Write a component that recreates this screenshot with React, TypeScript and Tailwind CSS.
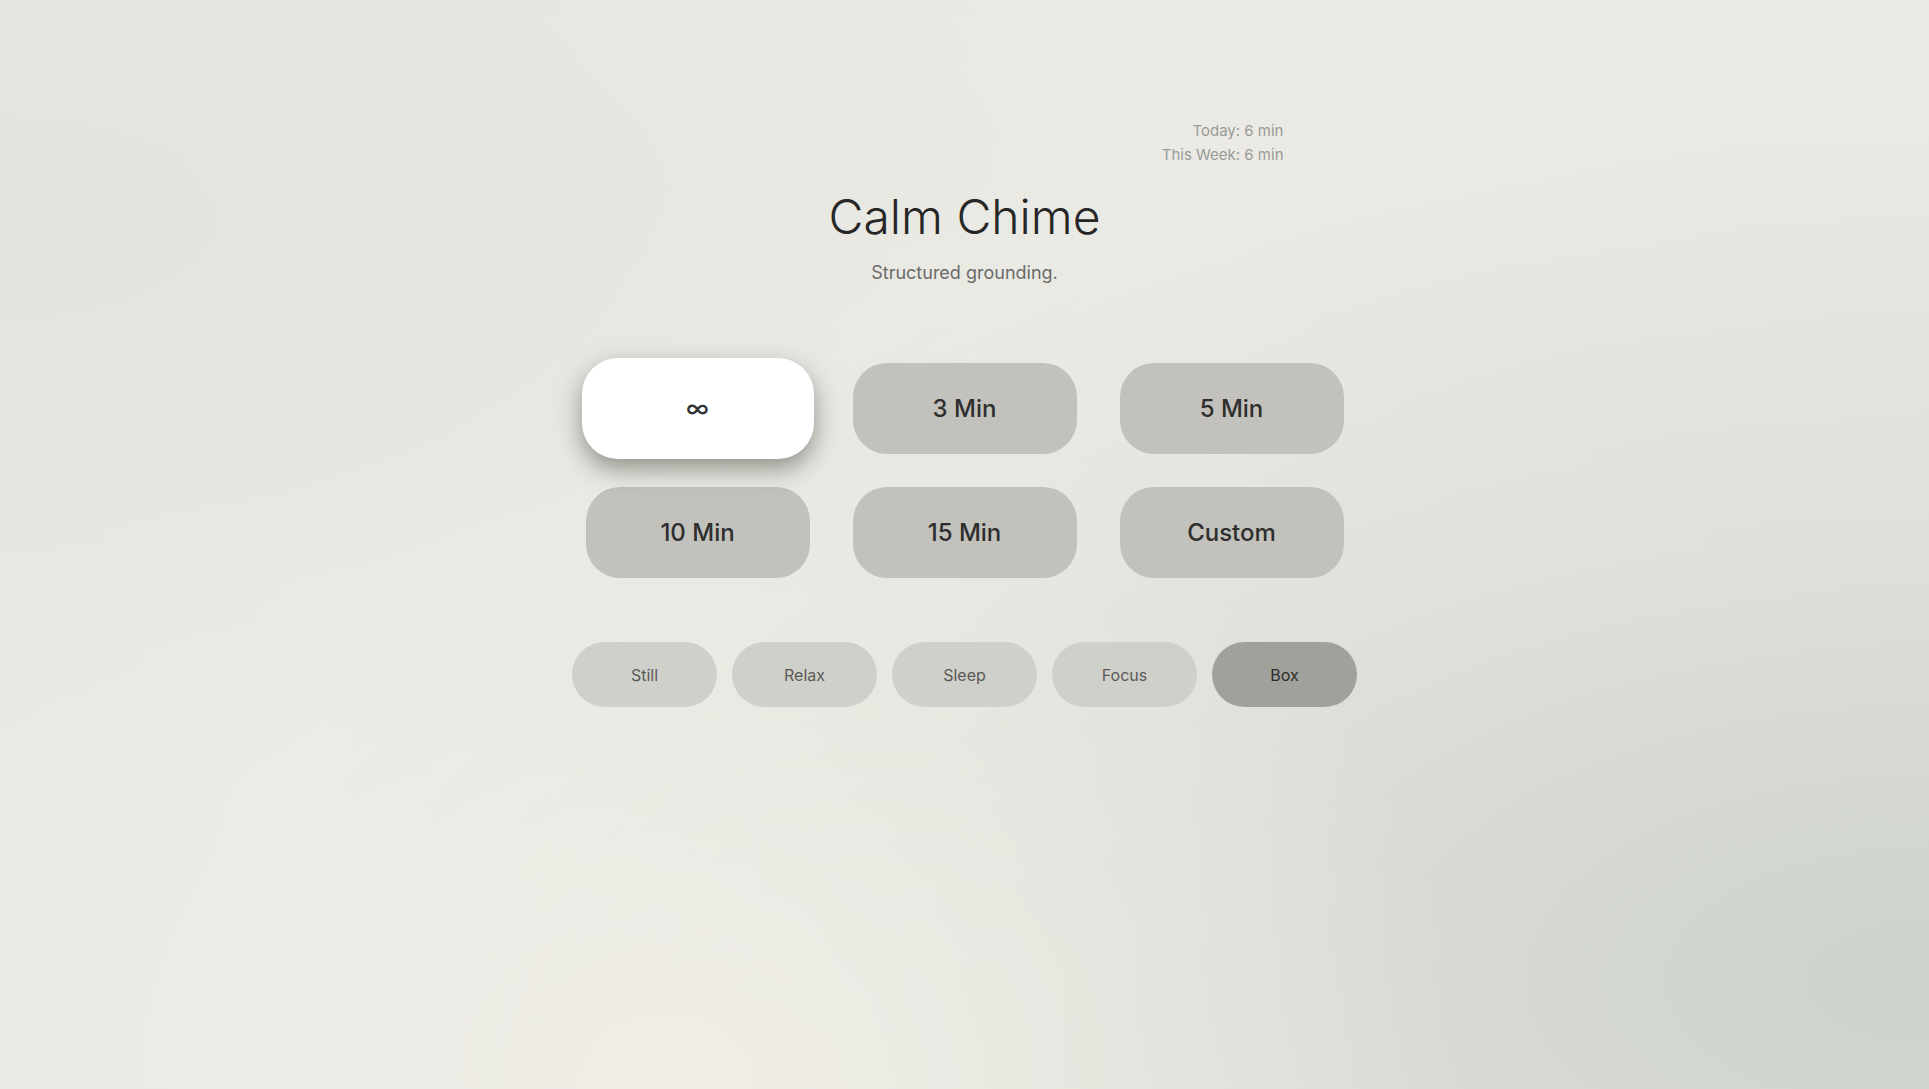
import React, { useState } from 'react';

const durations = ['∞', '3 Min', '5 Min', '10 Min', '15 Min', 'Custom'];
const modes = ['Still', 'Relax', 'Sleep', 'Focus', 'Box'];

export default function App() {
  const [duration, setDuration] = useState('∞');
  const [mode, setMode] = useState('Box');

  return (
    <div
      className="relative min-h-[1089px] w-full overflow-hidden bg-[#eae9e4] text-[#2b2b2b]"
      style={{ fontFamily: 'Inter, "Noto Sans", sans-serif' }}
    >
      {/* soft backdrop */}
      <div className="pointer-events-none absolute inset-0 bg-[radial-gradient(ellipse_at_50%_45%,#eeede8_0%,#ebeae5_35%,rgba(226,227,222,0)_70%)]" />
      <div className="pointer-events-none absolute inset-0 bg-[radial-gradient(ellipse_at_100%_90%,#cdd2cb_0%,rgba(214,218,211,0.6)_32%,rgba(234,233,228,0)_62%)]" />
      <div className="pointer-events-none absolute inset-0 bg-[radial-gradient(ellipse_at_0%_20%,#e3e4df_0%,rgba(234,233,228,0)_45%)]" />
      <div className="pointer-events-none absolute inset-0 bg-[radial-gradient(ellipse_at_35%_100%,#f0eee7_0%,rgba(240,238,231,0)_45%)]" />

      <div className="relative flex flex-col items-center pt-[119px]">
        {/* Stats */}
        <div className="flex w-[638px] flex-col items-end text-[15px] leading-[24px] text-[#9a9a96]">
          <span>Today: 6 min</span>
          <span>This Week: 6 min</span>
        </div>

        {/* Title */}
        <h1 className="mt-[21px] text-[48px] font-light leading-[58px] text-[#262626]">
          Calm Chime
        </h1>
        <p className="mt-[13px] text-[18px] leading-[28px] text-[#6b6b68]">Structured grounding.</p>

        {/* Durations */}
        <div className="mt-[76px] grid grid-cols-[224px_224px_224px] gap-x-[43px] gap-y-[33px]">
          {durations.map(d => {
            const active = d === duration;
            return (
              <button
                key={d}
                onClick={() => setDuration(d)}
                className={
                  active
                    ? 'relative z-10 -mx-[4px] -my-[5px] flex h-[101px] w-[232px] items-center justify-center rounded-[36px] bg-white text-[24px] font-medium text-[#333] shadow-[0_10px_24px_rgba(60,60,50,0.5)]'
                    : 'flex h-[91px] w-[224px] items-center justify-center rounded-[34px] bg-[#c2c1bb] text-[24px] font-medium text-[#2e2e2e]'
                }
              >
                {d}
              </button>
            );
          })}
        </div>

        {/* Modes */}
        <div className="mt-[64px] flex gap-[15px]">
          {modes.map(m => {
            const active = m === mode;
            return (
              <button
                key={m}
                onClick={() => setMode(m)}
                className={
                  'flex h-[65px] w-[145px] items-center justify-center rounded-full text-[16px] ' +
                  (active ? 'bg-[#a1a19c] text-[#2e2e2e]' : 'bg-[#d0d0cb] text-[#5a5a57]')
                }
              >
                {m}
              </button>
            );
          })}
        </div>
      </div>
    </div>
  );
}
